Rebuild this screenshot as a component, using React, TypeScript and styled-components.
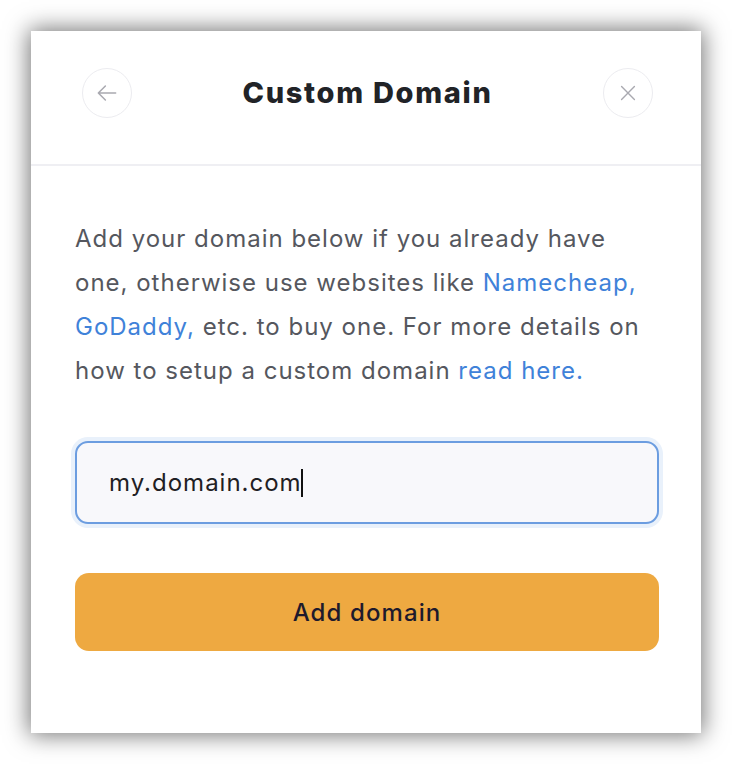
import styled, { createGlobalStyle } from 'styled-components';
import { useState } from 'react';

const GlobalStyle = createGlobalStyle`
  html, body {
    margin: 0;
    padding: 0;
    background: #ffffff;
  }
  body {
    font-family: Inter, 'Noto Sans', sans-serif;
    -webkit-font-smoothing: antialiased;
  }
`;

export default function App() {
  const [domain, setDomain] = useState<string>('my.domain.com');

  return (
    <Page>
      <GlobalStyle />
      <Modal>
        <Header>
          <RoundButton type='button' title='Back'>
            <svg width='26' height='26' viewBox='0 0 24 24' fill='none'>
              <path
                d='M20 12H4.5M10.5 5.5L4 12l6.5 6.5'
                stroke='#a9a9b0'
                strokeWidth='1.4'
                strokeLinecap='round'
                strokeLinejoin='round'
              />
            </svg>
          </RoundButton>
          <Title>Custom Domain</Title>
          <RoundButton type='button' title='Close'>
            <svg width='22' height='22' viewBox='0 0 24 24' fill='none'>
              <path
                d='M5 5l14 14M19 5L5 19'
                stroke='#a9a9b0'
                strokeWidth='1.5'
                strokeLinecap='round'
              />
            </svg>
          </RoundButton>
        </Header>

        <Body>
          <Description>
            Add your domain below if you already have one, otherwise use
            websites like <Link href='#'>Namecheap,</Link>{' '}
            <Link href='#'>GoDaddy,</Link> etc. to buy one. For more details on
            how to setup a custom domain <Link href='#'>read here.</Link>
          </Description>

          <InputWrap>
            <DomainInput
              type='text'
              value={domain}
              onChange={(e) => setDomain(e.target.value)}
            />
            {/* caret drawn so the focused state shows in a still picture */}
            <Caret />
          </InputWrap>

          <SubmitButton type='button'>Add domain</SubmitButton>
        </Body>
      </Modal>
    </Page>
  );
}

const Page = styled.div`
  padding: 31px;
  width: 732px;
  box-sizing: border-box;
`;

const Modal = styled.section`
  width: 670px;
  height: 702px;
  background: #ffffff;
  box-shadow: 0 0 22px 2px rgba(0, 0, 0, 0.55);
  display: flex;
  flex-direction: column;
`;

const Header = styled.header`
  height: 135px;
  display: flex;
  align-items: center;
  justify-content: space-between;
  padding: 0 48px 10px 51px;
  border-bottom: 2px solid #efeff3;
  box-sizing: border-box;
  flex-shrink: 0;
`;

const RoundButton = styled.button`
  width: 50px;
  height: 50px;
  border-radius: 50%;
  border: 1px solid #ececf0;
  background: #ffffff;
  display: grid;
  place-items: center;
  padding: 0;
  cursor: pointer;
`;

const Title = styled.h2`
  margin: 0;
  font-size: 29px;
  font-weight: 800;
  color: #212327;
  letter-spacing: 1.7px;
`;

const Body = styled.div`
  padding: 51px 42px 0 44px;
  display: flex;
  flex-direction: column;
`;

const Description = styled.p`
  margin: 0;
  font-size: 24px;
  line-height: 44px;
  letter-spacing: 1px;
  color: #55575e;
`;

const Link = styled.a`
  color: #3f82d9;
  text-decoration: none;
`;

const InputWrap = styled.div`
  position: relative;
  margin-top: 48px;
  display: flex;
`;

const DomainInput = styled.input`
  flex: 1;
  height: 83px;
  box-sizing: border-box;
  border: 2px solid #6c9de0;
  border-radius: 13px;
  background: #f8f8fb;
  box-shadow: 0 0 0 4px #e9f1fb;
  padding: 0 32px;
  font-family: Inter, 'Noto Sans', sans-serif;
  font-size: 24px;
  letter-spacing: 1px;
  color: #1f2024;
  outline: none;
  caret-color: transparent;
`;

const Caret = styled.span`
  position: absolute;
  left: 226px;
  top: 28px;
  width: 2px;
  height: 28px;
  background: #111111;
  pointer-events: none;
`;

const SubmitButton = styled.button`
  margin-top: 49px;
  height: 78px;
  border: none;
  border-radius: 14px;
  background: #eea941;
  color: #1e1a2c;
  font-family: Inter, 'Noto Sans', sans-serif;
  font-size: 24px;
  font-weight: 500;
  letter-spacing: 1.1px;
  cursor: pointer;
`;
